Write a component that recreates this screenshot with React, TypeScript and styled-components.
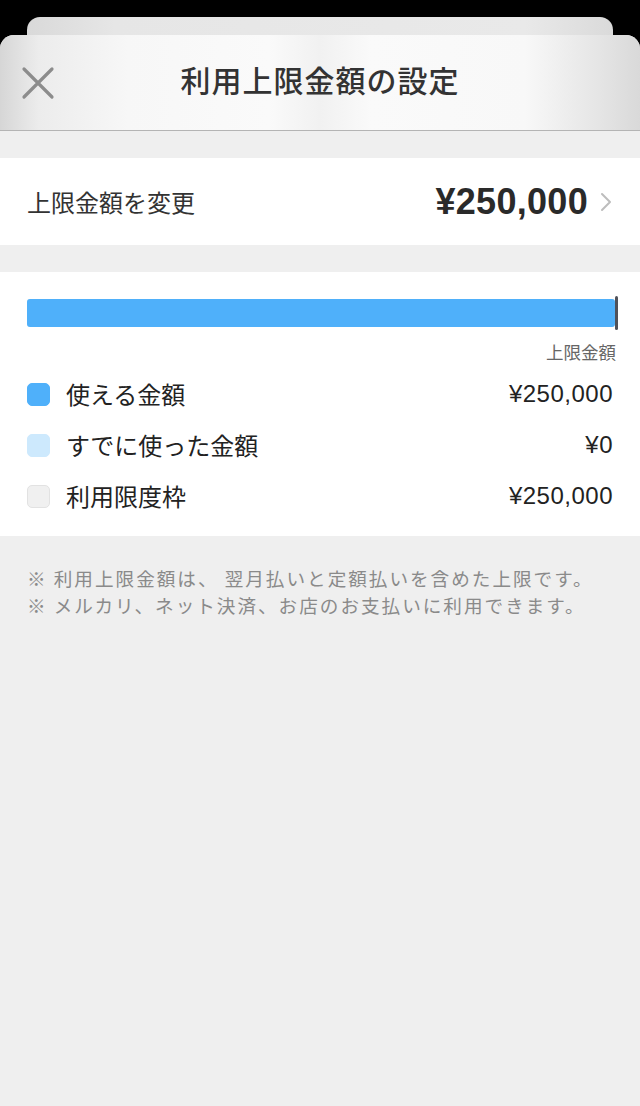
import styled, { createGlobalStyle } from "styled-components";

const GlobalStyle = createGlobalStyle`
  html, body {
    margin: 0;
    padding: 0;
    background: #000;
  }
  body {
    font-family: "Liberation Sans", "Noto Sans CJK JP", sans-serif;
    -webkit-font-smoothing: antialiased;
  }
`;

const Screen = styled.div`
  display: flex;
  flex-direction: column;
  min-height: 100vh;
  padding-top: 17px;
  box-sizing: border-box;
  background: #000;
`;

const BackCard = styled.div`
  height: 18px;
  margin: 0 27px;
  border-radius: 13px 13px 0 0;
  background: linear-gradient(90deg, #d9d9d9 0%, #e6e6e6 15%, #e9e9e9 85%, #dadada 100%);
`;

const Sheet = styled.div`
  flex: 1;
  display: flex;
  flex-direction: column;
  background: #efefef;
  border-radius: 14px 14px 0 0;
  overflow: hidden;
`;

const Header = styled.header`
  position: relative;
  height: 96px;
  display: flex;
  align-items: center;
  justify-content: center;
  padding-bottom: 8px;
  box-sizing: border-box;
  border-bottom: 1px solid #b4b4b4;
  background: linear-gradient(
    90deg,
    #d6d6d6 0%,
    #ececec 6%,
    #f7f7f7 20%,
    #fafafa 42%,
    #f1f1f1 50%,
    #fafafa 58%,
    #f8f8f8 82%,
    #e6e6e6 93%,
    #d9d9d9 100%
  );
`;

const CloseButton = styled.button`
  position: absolute;
  left: 20px;
  top: 30px;
  width: 36px;
  height: 36px;
  padding: 0;
  border: none;
  background: none;
  display: flex;
  align-items: center;
  justify-content: center;
`;

const Title = styled.h1`
  margin: 0;
  font-family: "Noto Sans CJK JP", sans-serif;
  font-size: 30px;
  line-height: 40px;
  font-weight: 500;
  color: #333;
  letter-spacing: 1px;
`;

const Section = styled.section`
  background: #fff;
  margin-top: 27px;
`;

const LimitRow = styled.div`
  height: 87px;
  display: flex;
  align-items: center;
  padding: 0 28px 0 27px;
`;

const RowLabel = styled.span`
  flex: 1;
  font-family: "Noto Sans CJK JP", sans-serif;
  font-size: 24px;
  line-height: 32px;
  color: #333;
`;

const BigAmount = styled.span`
  font-size: 36px;
  line-height: 40px;
  font-weight: 700;
  color: #2a2a2a;
  letter-spacing: 0.3px;
  margin-right: 12px;
`;

const Chart = styled.div`
  padding: 27px 27px 24px 27px;
`;

const Track = styled.div`
  position: relative;
  height: 28px;
  margin-right: -2px;
  background: #f0f0f0;
  border-radius: 3px;
`;

const Fill = styled.div`
  height: 100%;
  background: #4fb0fa;
  border-radius: 3px;
`;

const LimitMark = styled.div`
  position: absolute;
  right: -3px;
  top: -3px;
  bottom: -3px;
  width: 3px;
  border-radius: 2px;
  background: #50525a;
`;

const MarkLabel = styled.div`
  text-align: right;
  margin-top: 15px;
  margin-right: -3px;
  font-family: "Noto Sans CJK JP", sans-serif;
  font-size: 17.5px;
  line-height: 20px;
  color: #666;
`;

const Legend = styled.div`
  display: flex;
  flex-direction: column;
  gap: 19px;
  margin-top: 16px;
`;

const LegendRow = styled.div`
  height: 32px;
  display: flex;
  align-items: center;
`;

const Swatch = styled.span<{ $color: string; $border?: string }>`
  width: 23px;
  height: 23px;
  border-radius: 5px;
  background: ${(p) => p.$color};
  box-sizing: border-box;
  border: 1px solid ${(p) => p.$border ?? p.$color};
  margin-right: 16px;
`;

const LegendLabel = styled.span`
  flex: 1;
  font-family: "Noto Sans CJK JP", sans-serif;
  font-size: 24px;
  line-height: 32px;
  color: #222;
`;

const LegendValue = styled.span`
  font-size: 24px;
  line-height: 32px;
  letter-spacing: 0.5px;
  color: #222;
`;

const Notes = styled.div`
  padding: 28px 27px 0;
  font-family: "Noto Sans CJK JP", sans-serif;
  font-size: 18.6px;
  line-height: 27px;
  letter-spacing: 2px;
  color: #8a8a8a;
`;

const NoteLine = styled.p`
  margin: 0;
  white-space: nowrap;
`;

const legend = [
  { label: "使える金額", value: "¥250,000", color: "#4fb0fa" },
  { label: "すでに使った金額", value: "¥0", color: "#cde9fd" },
  { label: "利用限度枠", value: "¥250,000", color: "#f0f0f0", border: "#e2e2e2" },
];

const limit = 250000;
const available = 250000;

export default function App() {
  return (
    <>
      <GlobalStyle />
      <Screen>
        <BackCard />
        <Sheet>
          <Header>
            <CloseButton aria-label="閉じる">
              <svg width="34" height="34" viewBox="0 0 34 34">
                <path
                  d="M3 3 L31 31 M31 3 L3 31"
                  stroke="#8c8c8c"
                  strokeWidth="3.2"
                  strokeLinecap="round"
                />
              </svg>
            </CloseButton>
            <Title>利用上限金額の設定</Title>
          </Header>

          <Section>
            <LimitRow>
              <RowLabel>上限金額を変更</RowLabel>
              <BigAmount>¥250,000</BigAmount>
              <svg width="12" height="20" viewBox="0 0 12 20">
                <path
                  d="M2 2 L10 10 L2 18"
                  fill="none"
                  stroke="#bdbdbd"
                  strokeWidth="2"
                  strokeLinecap="round"
                  strokeLinejoin="round"
                />
              </svg>
            </LimitRow>
          </Section>

          <Section>
            <Chart>
              <Track>
                <Fill style={{ width: `${(available / limit) * 100}%` }} />
                <LimitMark />
              </Track>
              <MarkLabel>上限金額</MarkLabel>
              <Legend>
                {legend.map((item) => (
                  <LegendRow key={item.label}>
                    <Swatch $color={item.color} $border={item.border} />
                    <LegendLabel>{item.label}</LegendLabel>
                    <LegendValue>{item.value}</LegendValue>
                  </LegendRow>
                ))}
              </Legend>
            </Chart>
          </Section>

          <Notes>
            <NoteLine>※ 利用上限金額は、 翌月払いと定額払いを含めた上限です。</NoteLine>
            <NoteLine>※ メルカリ、ネット決済、お店のお支払いに利用できます。</NoteLine>
          </Notes>
        </Sheet>
      </Screen>
    </>
  );
}
